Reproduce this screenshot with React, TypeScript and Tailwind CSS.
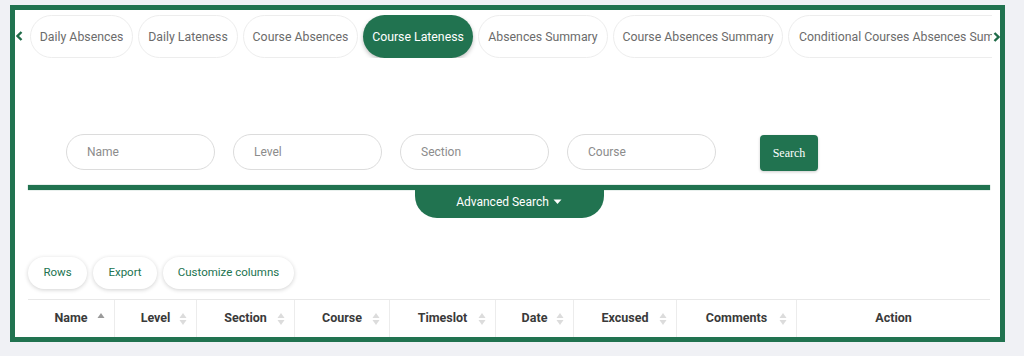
import React from "react";

const tabs = [
  { label: "Daily Absences", w: "w-[103px]" },
  { label: "Daily Lateness", w: "w-[100px]" },
  { label: "Course Absences", w: "w-[115px]" },
  { label: "Course Lateness", w: "w-[110px]", active: true },
  { label: "Absences Summary", w: "w-[130px]" },
  { label: "Course Absences Summary", w: "w-[170px]" },
  { label: "Conditional Courses Absences Summary", w: "w-[240px]" },
];

const filters = ["Name", "Level", "Section", "Course"];

const columns = [
  { label: "Name", w: "w-[87px]", sort: "up" },
  { label: "Level", w: "w-[82px]", sort: "both" },
  { label: "Section", w: "w-[98px]", sort: "both" },
  { label: "Course", w: "w-[95px]", sort: "both" },
  { label: "Timeslot", w: "w-[106px]", sort: "both" },
  { label: "Date", w: "w-[78px]", sort: "both" },
  { label: "Excused", w: "w-[103px]", sort: "both" },
  { label: "Comments", w: "w-[120px]", sort: "both" },
  { label: "Action", w: "flex-1", sort: "none" },
];

const SortIcon: React.FC<{ mode: string }> = ({ mode }) => {
  if (mode === "none") return null;
  return (
    <svg
      width="8"
      height="16"
      viewBox="0 0 8 16"
      className="absolute right-[9px] top-1/2 -translate-y-1/2"
    >
      <path d="M4 2 L7.5 7 L0.5 7 Z" fill={mode === "up" ? "#9a9a9a" : "#dcdcdc"} />
      {mode === "both" && <path d="M4 14 L7.5 9 L0.5 9 Z" fill="#dcdcdc" />}
    </svg>
  );
};

const Chevron: React.FC<{ dir: "left" | "right" }> = ({ dir }) => (
  <svg width="7" height="10" viewBox="0 0 7 10">
    <path
      d={dir === "left" ? "M5.5 1 L1.5 5 L5.5 9" : "M1.5 1 L5.5 5 L1.5 9"}
      stroke="#1f6b48"
      strokeWidth="2.4"
      fill="none"
    />
  </svg>
);

export default function App() {
  return (
    <div
      className="h-[356px] w-[1024px] overflow-hidden bg-[#f0f1f5] pl-[10px] pt-[5px]"
      style={{ fontFamily: "Roboto, 'Liberation Sans', sans-serif" }}
    >
      <div className="h-[337px] w-[995px] overflow-hidden border-[5px] border-[#217350] bg-white">
        {/* tabs */}
        <div className="relative flex h-[48px] items-end">
          <div className="flex h-[43px] w-[15px] items-center pb-[1px] pl-[1px]">
            <Chevron dir="left" />
          </div>
          <div className="flex h-[43px] w-[962px] gap-[5px] overflow-hidden">
            {tabs.map((t) => (
              <div
                key={t.label}
                className={`flex h-[43px] shrink-0 items-center whitespace-nowrap rounded-full px-[10px] pt-[1px] text-[12.3px] ${t.w} ${
                  t.active
                    ? "justify-center bg-[#217350] text-white shadow-[0_2px_4px_rgba(0,0,0,0.25)]"
                    : "border border-[#ededed] text-[#6b6b6b]"
                } ${t.active ? "" : t.label.startsWith("Conditional") ? "justify-start" : "justify-center"}`}
              >
                {t.label}
              </div>
            ))}
          </div>
          <div className="absolute right-[0px] top-[22px]">
            <Chevron dir="right" />
          </div>
        </div>

        {/* search row */}
        <div className="mt-[76px] flex items-start pl-[51px]">
          <div className="flex gap-[18px]">
            {filters.map((f) => (
              <div
                key={f}
                className="flex h-[36px] w-[149px] items-center rounded-full border border-[#dcdcdc] pl-[20px] text-[12px] text-[#8c8c8c]"
              >
                {f}
              </div>
            ))}
          </div>
          <button
            className="ml-[44px] mt-[1px] h-[36px] w-[58px] rounded-[4px] bg-[#217350] text-[12px] text-white shadow-[0_1px_3px_rgba(0,0,0,0.2)]"
            style={{ fontFamily: "'Liberation Serif', serif" }}
          >
            Search
          </button>
        </div>

        {/* advanced search divider */}
        <div className="ml-[13px] mt-[14px] flex w-[962px] flex-col items-center">
          <div className="h-[5px] w-full bg-[#217350] shadow-[0_0_1px_rgba(33,115,80,0.6)]" />
          <div className="flex h-[28px] w-[189px] items-center justify-center gap-[4px] rounded-b-[22px] bg-[#217350] pb-[4px] text-[12px] text-white">
            Advanced Search
            <svg width="9" height="6" viewBox="0 0 9 6">
              <path d="M0.5 0.5 L8.5 0.5 L4.5 5 Z" fill="white" />
            </svg>
          </div>
        </div>

        {/* actions */}
        <div className="ml-[13px] mt-[39px] flex gap-[6px]">
          {["Rows", "Export", "Customize columns"].map((b, i) => (
            <button
              key={b}
              className={`h-[32px] rounded-full bg-white text-[11.5px] text-[#217350] shadow-[0_1px_4px_rgba(0,0,0,0.18)] ${
                i === 0 ? "w-[59px]" : i === 1 ? "w-[64px]" : "w-[131px]"
              }`}
            >
              {b}
            </button>
          ))}
        </div>

        {/* table header */}
        <div className="ml-[13px] mt-[10px] flex h-[38px] w-[962px] border-t border-[#e8e8e8]">
          {columns.map((c, i) => (
            <div
              key={c.label}
              className={`relative flex h-full items-center justify-center text-[12.5px] font-bold text-[#3a3a3a] ${c.w} ${
                i < columns.length - 1 ? "border-r border-[#ececec]" : ""
              }`}
            >
              {c.label}
              <SortIcon mode={c.sort} />
            </div>
          ))}
        </div>
      </div>
    </div>
  );
}
